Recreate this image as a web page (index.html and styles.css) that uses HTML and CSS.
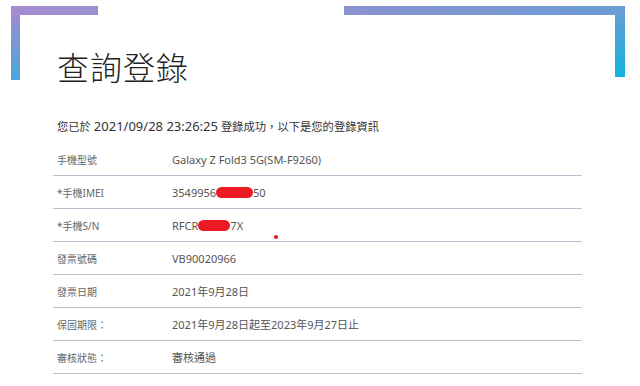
FILE: index.html
```html
<!DOCTYPE html>
<html lang="zh-Hant">
<head>
<meta charset="utf-8">
<title>查詢登錄</title>
<link rel="stylesheet" href="styles.css">
</head>
<body>
<header class="head">
  <h1 class="title">查詢登錄</h1>
</header>
<main class="content">
  <p class="intro">您已於 <span class="num">2021/09/28 23:26:25</span> 登錄成功，以下是您的登錄資訊</p>
  <div class="table">
    <div class="row"><span class="label">手機型號</span><span class="value">Galaxy Z Fold3 5G(SM-F9260)</span></div>
    <div class="row"><span class="label">*手機IMEI</span><span class="value">3549956<span class="redact r1"></span>50</span></div>
    <div class="row"><span class="label">*手機S/N</span><span class="value">RFCR<span class="redact r2"></span>7X</span><span class="dot"></span></div>
    <div class="row"><span class="label">發票號碼</span><span class="value">VB90020966</span></div>
    <div class="row"><span class="label">發票日期</span><span class="value">2021年9月28日</span></div>
    <div class="row"><span class="label">保固期限：</span><span class="value">2021年9月28日起至2023年9月27日止</span></div>
    <div class="row"><span class="label">審核狀態：</span><span class="value">審核通過</span></div>
  </div>
</main>
</body>
</html>
```
FILE: styles.css
```css
html, body {
  margin: 0;
  padding: 0;
  background: #fff;
}
body {
  width: 640px;
  height: 386px;
  overflow: hidden;
  font-family: "Noto Sans", "Noto Sans CJK TC", sans-serif;
  color: #333;
}
.head {
  height: 100px;
  padding: 46px 0 0 57px;
  box-sizing: border-box;
  background-image:
    linear-gradient(to right, #a58bd1, #9b8fd2),
    linear-gradient(to bottom, #a58bd1, #4aa7da),
    linear-gradient(to right, #8b93d0, #6a9cd4),
    linear-gradient(to bottom, #6a9cd4, #10b4dd);
  background-repeat: no-repeat;
  background-position: 11px 6px, 11px 6px, 344px 6px, 615px 6px;
  background-size: 87px 9px, 9px 74px, 281px 9px, 10px 71px;
}
.title {
  margin: 0;
  font-family: "Noto Sans CJK TC", sans-serif;
  font-weight: 300;
  font-size: 32px;
  line-height: 40px;
  color: #222;
  letter-spacing: 1px;
}
.content {
  padding: 0 58px 0 53px;
}
.intro {
  margin: 16px 0 6px 4px;
  font-size: 11.3px;
  line-height: 20px;
  color: #333;
}
.num {
  font-size: 13px;
}
.table {
  display: flex;
  flex-direction: column;
}
.row {
  position: relative;
  display: flex;
  align-items: center;
  height: 32px;
  border-bottom: 1px solid #b4c2d2;
  font-size: 11px;
  color: #666;
}
.label {
  width: 115px;
  padding-left: 4px;
  flex-shrink: 0;
  font-size: 10px;
}
.value {
  color: #555;
  display: flex;
  align-items: center;
}
.redact {
  display: inline-block;
  height: 11px;
  background: #ec1a22;
  border-radius: 6px;
}
.r1 { width: 37px; }
.r2 { width: 32px; }
.dot {
  position: absolute;
  left: 221px;
  top: 26px;
  width: 4px;
  height: 4px;
  border-radius: 50%;
  background: #e8141c;
}
```
